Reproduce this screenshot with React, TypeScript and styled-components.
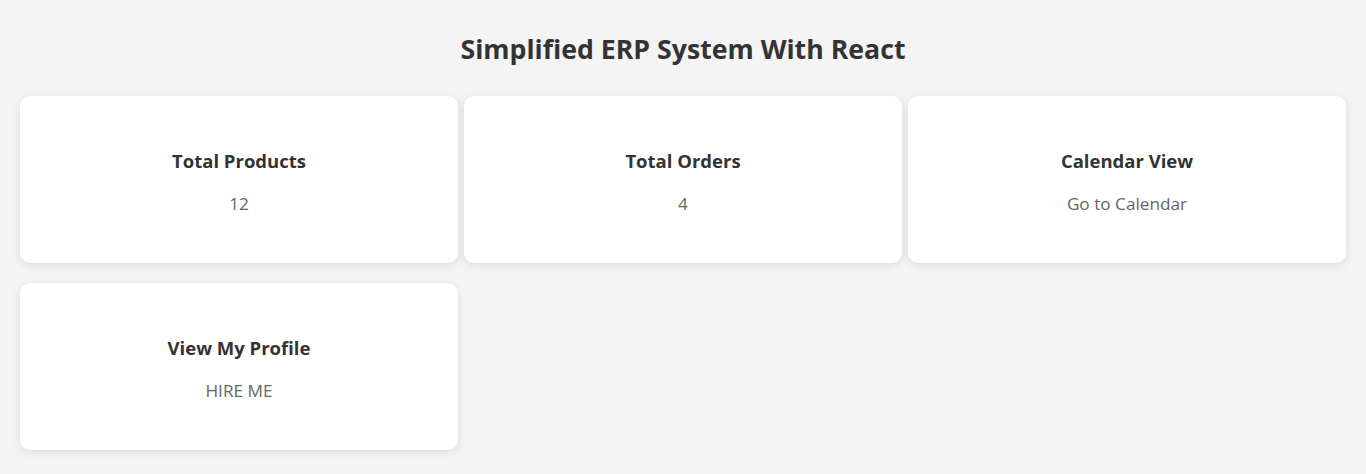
import React from "react";
import styled, { createGlobalStyle } from "styled-components";

const Global = createGlobalStyle`
  html, body { margin: 0; padding: 0; background: #f4f4f4; }
  body { font-family: "Open Sans", "Noto Sans", sans-serif; color: #333; }
`;

const Page = styled.div`
  padding: 29px 20px 20px;
`;

const Title = styled.h1`
  margin: 0 0 27px;
  text-align: center;
  font-size: 26.7px;
  line-height: 40px;
  font-weight: 700;
  color: #333;
`;

const Grid = styled.div`
  display: grid;
  grid-template-columns: repeat(3, 1fr);
  column-gap: 6px;
  row-gap: 20px;
`;

const Card = styled.div`
  background: #fff;
  border-radius: 10px;
  box-shadow: 0 2px 8px rgba(0, 0, 0, 0.1);
  padding: 52px 20px 48px;
  text-align: center;
`;

const CardTitle = styled.h3`
  margin: 0 0 18px;
  font-size: 18.5px;
  line-height: 26px;
  font-weight: 700;
  color: #333;
`;

const CardValue = styled.p`
  margin: 0;
  font-size: 17.2px;
  line-height: 23px;
  color: #666;
`;

const items = [
  { title: "Total Products", value: "12" },
  { title: "Total Orders", value: "4" },
  { title: "Calendar View", value: "Go to Calendar" },
  { title: "View My Profile", value: "HIRE ME" },
];

export default function App() {
  return (
    <>
      <Global />
      <Page>
        <Title>Simplified ERP System With React</Title>
        <Grid>
          {items.map((it) => (
            <Card key={it.title}>
              <CardTitle>{it.title}</CardTitle>
              <CardValue>{it.value}</CardValue>
            </Card>
          ))}
        </Grid>
      </Page>
    </>
  );
}
